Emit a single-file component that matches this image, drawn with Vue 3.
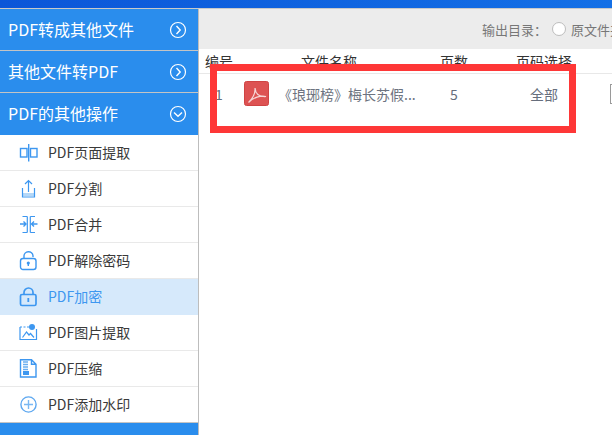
<script setup>
const tops = [
  { label: 'PDF转成其他文件', open: false },
  { label: '其他文件转PDF', open: false },
  { label: 'PDF的其他操作', open: true },
]
const items = [
  { label: 'PDF页面提取', icon: 'extract' },
  { label: 'PDF分割', icon: 'split' },
  { label: 'PDF合并', icon: 'merge' },
  { label: 'PDF解除密码', icon: 'unlock' },
  { label: 'PDF加密', icon: 'lock', active: true },
  { label: 'PDF图片提取', icon: 'image' },
  { label: 'PDF压缩', icon: 'zip' },
  { label: 'PDF添加水印', icon: 'plus' },
]
</script>

<template>
  <div class="page">
    <div class="topbar"></div>
    <div class="main">
      <aside class="sidebar">
        <div v-for="t in tops" :key="t.label" class="group">
          <span class="lift">{{ t.label }}</span>
          <svg width="18" height="18" viewBox="0 0 18 18" fill="none" stroke="#fff" class="chev">
            <circle cx="9" cy="9" r="7.5" stroke-width="1.2" />
            <path v-if="t.open" d="M5 7.5 L9 11.2 L13 7.5" stroke-width="1.4" />
            <path v-else d="M7.5 5 L11.2 9 L7.5 13" stroke-width="1.4" />
          </svg>
        </div>
        <ul class="list">
          <li v-for="it in items" :key="it.label" class="item" :class="{ active: it.active }">
            <svg class="ico" width="20" height="20" viewBox="0 0 20 20" fill="none" stroke="#3d97f0" stroke-width="1.2">
              <template v-if="it.icon === 'extract'">
                <rect x="1.5" y="5.5" width="6.5" height="8.5" stroke-width="1.4" />
                <rect x="11.5" y="5.5" width="6.5" height="8.5" stroke-width="1.4" />
                <path d="M9.7 1 V18.5" stroke-width="1.4" />
              </template>
              <template v-else-if="it.icon === 'split'">
                <rect x="4" y="14" width="11" height="3" fill="#b5d8f8" stroke="none" />
                <path d="M3.5 9 V18 H15.5 V9" />
                <path d="M9.5 13 V1.5 M6 5 L9.5 1.5 L13 5" />
              </template>
              <template v-else-if="it.icon === 'merge'">
                <path d="M8.3 1.5 V17.5 M11.3 1.5 V17.5 M3.5 1.5 H8.3 M11.3 1.5 H16 M3.5 17.5 H8.3 M11.3 17.5 H16" />
                <path d="M1 9 H7 M4.5 6.5 L7 9 L4.5 11.5 M18.5 9 H12.5 M15 6.5 L12.5 9 L15 11.5" stroke-width="1.4" />
              </template>
              <template v-else-if="it.icon === 'unlock'">
                <rect x="1.5" y="7.5" width="15.5" height="11" rx="2.5" stroke-width="1.4" />
                <path d="M5 7.5 V5.5 A4.5 4.5 0 0 1 14 5 V6" stroke-width="1.4" />
                <circle cx="9.3" cy="12" r="1.6" fill="#3d97f0" stroke="none" />
                <path d="M9.3 12 V15" stroke-width="1.4" />
              </template>
              <template v-else-if="it.icon === 'lock'">
                <rect x="1.5" y="7.5" width="15.5" height="11" rx="1.5" stroke-width="1.7" />
                <path d="M5 7.5 V5.5 A4.5 4.5 0 0 1 14 5.5 V7.5" stroke-width="1.7" />
                <path d="M9.3 11 V15" stroke-width="1.8" />
              </template>
              <template v-else-if="it.icon === 'image'">
                <path d="M1 4 V16.5 H17.5 V6" />
                <path d="M1 4 H11" stroke-dasharray="2 1.5" />
                <circle cx="13" cy="4" r="3" fill="#3d97f0" stroke="none" />
                <path d="M3.5 14.5 L7.5 9 L10 12 L11.5 10.5 L15 14.5" />
              </template>
              <template v-else-if="it.icon === 'zip'">
                <path d="M1.5 .8 H12.5 L17 5.3 V18 H1.5 Z M12.5 .8 V5.3 H17" stroke-width="1.4" />
                <path d="M4 3 H9 M4 5.5 H9 M4 8 H9 M4 10.5 H9" stroke="#6aaef0" stroke-width="1.3" />
                <rect x="4" y="12" width="6" height="4" fill="#3d97f0" stroke="none" />
              </template>
              <template v-else>
                <circle cx="9.5" cy="9.5" r="7.6" stroke="#5ea8f0" stroke-width="1.4" />
                <path d="M9.5 5 V14 M5 9.5 H14" stroke="#7ab8f3" stroke-width="1.4" />
              </template>
            </svg>
            <span class="lift">{{ it.label }}</span>
          </li>
        </ul>
        <div class="foot"></div>
      </aside>
      <section class="content">
        <div class="toolbar">
          <span class="dir">输出目录：</span>
          <i class="radio"></i>
          <span class="src">原文件夹</span>
        </div>
        <div class="thead">
          <span>编号</span><span>文件名称</span><span>页数</span><span>页码选择</span>
        </div>
        <div class="row">
          <span class="num">1</span>
          <svg class="pdf" width="25" height="25" viewBox="0 0 25 25">
            <rect x=".5" y=".5" width="24" height="24" rx="2" fill="#dd5252" stroke="#cf4444" />
            <path d="M4.5 21.5 C8 18 11.5 13 11 7 C11.5 13 15 16 22 15.5 C17 14 9 16.5 4.5 21.5" fill="none" stroke="#f6d6d6" stroke-width="1.2" />
          </svg>
          <span class="name">《琅琊榜》梅长苏假...</span>
          <span class="pages">5</span>
          <span class="range">全部</span>
          <i class="check"></i>
        </div>
        <div class="highlight"></div>
      </section>
    </div>
  </div>
</template>

<style>
html, body { margin: 0; background: #fff; }
</style>

<style scoped>
.page {
  width: 612px;
  height: 435px;
  overflow: hidden;
  display: flex;
  flex-direction: column;
  font-family: "Noto Sans CJK SC", "Liberation Sans", sans-serif;
}
.topbar {
  height: 8px;
  background: linear-gradient(90deg, #0b56d8, #1470e6);
  border-bottom: 1px solid #c9c9c9;
}
.main { flex: 1; display: flex; min-height: 0; }
.sidebar {
  width: 198px;
  border-right: 1px solid #bdbdbd;
  display: flex;
  flex-direction: column;
  flex: none;
}
.group {
  height: 41px;
  flex: none;
  background: #2a8ded;
  border-bottom: 1px solid #c4c4c4;
  color: #fff;
  font-size: 16px;
  padding: 0 11px 0 8px;
  display: flex;
  align-items: center;
  justify-content: space-between;
}
.group:nth-child(3) { border-bottom: 0; height: 42px; }
.lift { padding-bottom: 2px; }
.list { list-style: none; margin: 0; padding: 0; }
.item {
  height: 35px;
  border-bottom: 1px solid #e9e9e9;
  display: flex;
  align-items: center;
  color: #3a3a3a;
  font-size: 14px;
  padding-left: 19px;
  gap: 9px;
}
.item.active { background: #d6e9fb; color: #3d97f0; border-bottom-color: #d6e9fb; }
.item:last-child { border-bottom: 1px solid #c4c4c4; }
.ico { flex: none; }
.foot { flex: 1; background: #2a8ded; }
.content { position: relative; flex: 1; min-width: 0; overflow: hidden; }
.toolbar {
  height: 40px;
  background: #ececec;
  display: flex;
  align-items: center;
  padding-left: 283px;
  font-size: 13px;
  color: #777;
  white-space: nowrap;
}
.dir { margin-right: 5px; }
.radio {
  width: 12px;
  height: 12px;
  border: 1px solid #bdbdbd;
  border-radius: 50%;
  background: #fff;
  margin-right: 5px;
  flex: none;
}
.thead {
  height: 24px;
  border-bottom: 1px solid #e8e8e8;
  display: grid;
  grid-template-columns: 96px 139px 76px 1fr;
  padding-left: 6px;
  align-items: center;
  font-size: 14px;
  color: #333;
  white-space: nowrap;
}
.row {
  height: 40px;
  display: flex;
  align-items: center;
  font-size: 14px;
  color: #666e7c;
  white-space: nowrap;
}
.row > * { flex: none; }
.num { margin-left: 16px; width: 29px; }
.pdf { margin-top: -1px; }
.name { margin-left: 9px; width: 172px; color: #6d7380; }
.pages { width: 80px; }
.range { width: 80px; }
.check {
  width: 18px;
  height: 18px;
  border: 1px solid #9a9a9a;
  background: #fff;
}
.highlight {
  position: absolute;
  left: 11px;
  top: 55px;
  width: 352px;
  height: 55px;
  border: 7px solid #fe3737;
  pointer-events: none;
}
</style>
